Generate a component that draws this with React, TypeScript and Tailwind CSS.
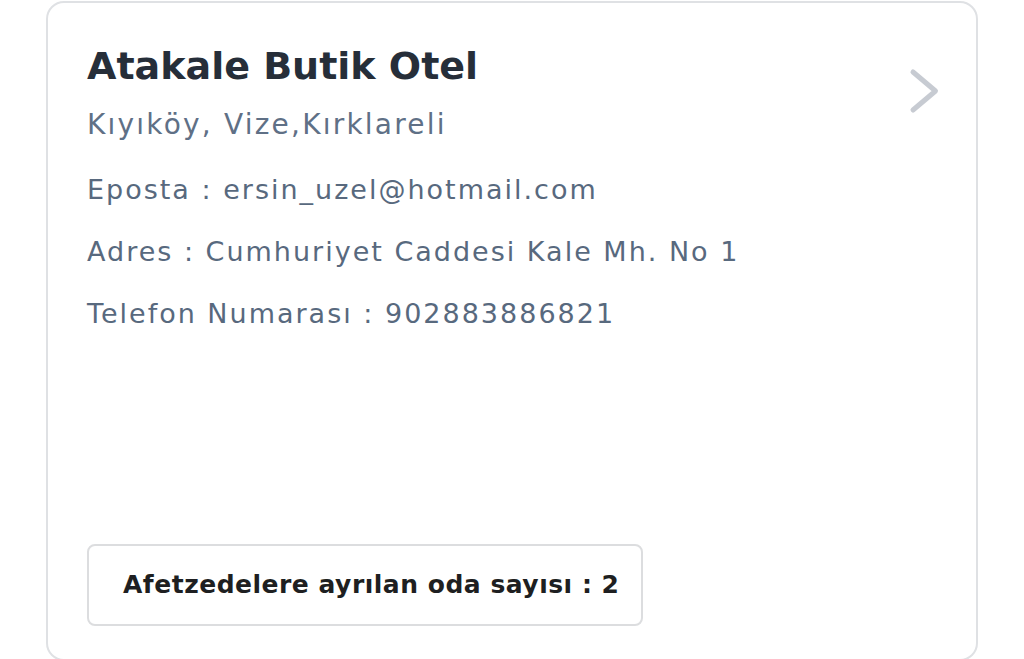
const font = { fontFamily: '"DejaVu Sans", "Noto Sans", sans-serif' };

export default function App() {
  return (
    <div className="h-[659px] w-[1024px] overflow-hidden bg-white" style={font}>
      <div className="relative ml-[46px] mt-[1px] flex h-[660px] w-[932px] flex-col rounded-[18px] border-2 border-[#dfe1e4] bg-white pb-[33px] pl-[39px] pr-[30px] pt-[40px]">
        <div>
          <h1 className="text-[38px] font-bold leading-[46px] text-[#262e39]">Atakale Butik Otel</h1>
          <p className="mt-[18px] text-[28px] leading-[36px] tracking-[2.2px] text-[#5f7086]">Kıyıköy, Vize,Kırklareli</p>
        </div>
        <svg
          className="absolute right-[35px] top-[62px] h-[52px] w-[36px] text-[#c7cbd2]"
          viewBox="0 0 36 52"
          fill="none"
          stroke="currentColor"
          strokeWidth={5}
          strokeLinecap="round"
          strokeLinejoin="round"
        >
          <polyline points="8,7 30.5,26 8,45" />
        </svg>
        <div className="mt-[29px] flex flex-col gap-[26px] text-[27px] leading-[36px] tracking-[2px] text-[#58697e]">
          <p>Eposta : ersin_uzel@hotmail.com</p>
          <p>Adres : Cumhuriyet Caddesi Kale Mh. No 1</p>
          <p>Telefon Numarası : 902883886821</p>
        </div>
        <div className="flex-1" />
        <div className="flex h-[82px] w-[556px] items-center rounded-[8px] border-2 border-[#dcdddf] pl-[34px]">
          <span className="text-[25px] font-bold tracking-[0.5px] text-[#1e1f21]">Afetzedelere ayrılan oda sayısı : 2</span>
        </div>
      </div>
    </div>
  );
}
